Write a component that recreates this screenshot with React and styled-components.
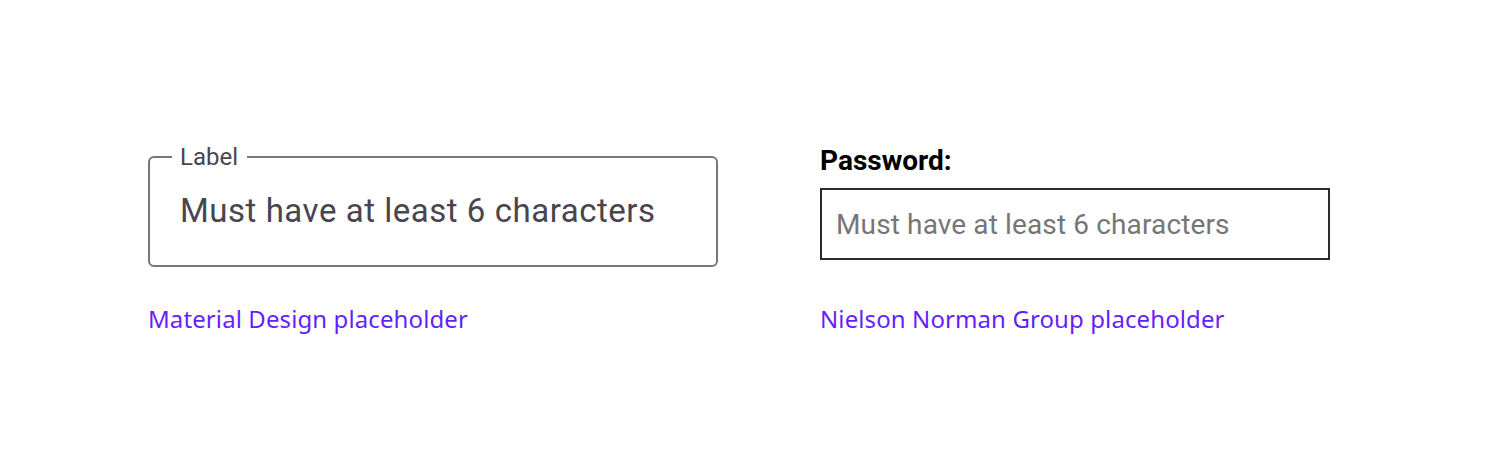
import React from 'react';
import styled, { createGlobalStyle } from 'styled-components';

const GlobalStyle = createGlobalStyle`
    html, body {
        margin: 0;
        padding: 0;
        background: #ffffff;
    }
`;

const Page = styled.div`
    box-sizing: border-box;
    width: 1500px;
    height: 460px;
    padding: 146px 0 0 148px;
    display: grid;
    grid-template-columns: 570px 510px;
    grid-template-rows: auto auto;
    align-content: start;
    column-gap: 102px;
    align-items: start;
`;

// MATERIAL OUTLINED FIELD
const Outlined = styled.fieldset`
    box-sizing: border-box;
    margin: 0;
    margin-top: -1px;
    height: 122px;
    padding: 0 0 0 30px;
    border: 2px solid #79747e;
    border-radius: 6px;
    display: flex;
    align-items: center;
`;

const Legend = styled.legend`
    margin-left: -8px;
    padding: 0 9px 0 8px;
    font-family: Roboto, sans-serif;
    font-size: 24px;
    line-height: 24px;
    color: #49454f;
`;

const MaterialInput = styled.input`
    border: none;
    outline: none;
    padding: 0;
    margin: 0 0 14px 0;
    width: 100%;
    background: transparent;
    font-family: Roboto, sans-serif;
    font-size: 33px;
    letter-spacing: 0.53px;
    color: #49454f;

    &::placeholder {
        color: #49454f;
        opacity: 1;
    }
`;

// NN/G STYLE FIELD
const Stack = styled.div`
    display: flex;
    flex-direction: column;
`;

const FieldLabel = styled.label`
    font-family: Roboto, sans-serif;
    font-weight: 700;
    font-size: 28px;
    line-height: 30px;
    color: #000000;
    margin-bottom: 12px;
`;

const PlainInput = styled.input`
    box-sizing: border-box;
    width: 510px;
    height: 72px;
    margin: 0;
    padding: 0 14px;
    border: 2px solid #2b2b2b;
    border-radius: 0;
    outline: none;
    font-family: Roboto, sans-serif;
    font-size: 28px;
    letter-spacing: 0.13px;
    color: #333;

    &::placeholder {
        color: #767676;
        opacity: 1;
    }
`;

const Caption = styled.div`
    margin-top: ${p => p.$offset}px;
    font-family: "Noto Sans", sans-serif;
    font-size: 24px;
    line-height: 32px;
    letter-spacing: 0.1px;
    color: #651fff;
`;

const App = () => {
    return (
        <>
            <GlobalStyle />
            <Page>
                <Outlined>
                    <Legend>Label</Legend>
                    <MaterialInput placeholder="Must have at least 6 characters" readOnly />
                </Outlined>
                <Stack>
                    <FieldLabel htmlFor="pw">Password:</FieldLabel>
                    <PlainInput id="pw" placeholder="Must have at least 6 characters" readOnly />
                </Stack>
                <Caption $offset={36}>Material Design placeholder</Caption>
                <Caption $offset={36}>Nielson Norman Group placeholder</Caption>
            </Page>
        </>
    );
};

export default App;
